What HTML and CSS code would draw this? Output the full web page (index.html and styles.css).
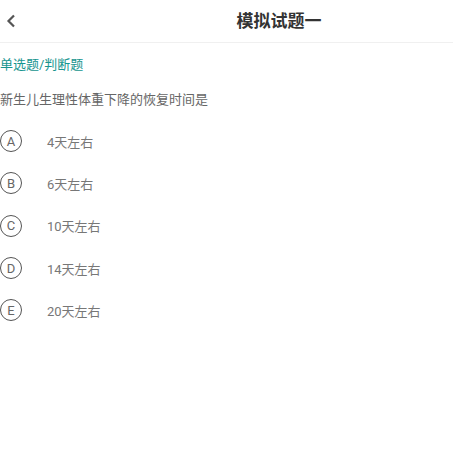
FILE: index.html
```html
<!DOCTYPE html>
<html lang="zh-CN">
<head>
<meta charset="utf-8">
<link rel="stylesheet" href="styles.css">
</head>
<body>
<header class="topbar">
  <span class="back">
    <svg width="10" height="14" viewBox="0 0 10 14"><path d="M8 1.5 L2.5 7 L8 12.5" fill="none" stroke="#555" stroke-width="2.2"/></svg>
  </span>
  <h1 class="title">模拟试题一</h1>
</header>
<main class="content">
  <div class="category">单选题/判断题</div>
  <div class="question">新生儿生理性体重下降的恢复时间是</div>
  <ul class="options">
    <li class="option"><span class="letter">A</span><span class="text">4天左右</span></li>
    <li class="option"><span class="letter">B</span><span class="text">6天左右</span></li>
    <li class="option"><span class="letter">C</span><span class="text">10天左右</span></li>
    <li class="option"><span class="letter">D</span><span class="text">14天左右</span></li>
    <li class="option"><span class="letter">E</span><span class="text">20天左右</span></li>
  </ul>
</main>
</body>
</html>
```
FILE: styles.css
```css
html, body {
  margin: 0;
  padding: 0;
  background: #fff;
  font-family: Roboto, "Noto Sans CJK SC", sans-serif;
}
.topbar {
  height: 42px;
  border-bottom: 1px solid #f0f0f0;
  display: flex;
  align-items: center;
}
.back {
  width: 30px;
  padding-left: 6px;
  display: flex;
  align-items: center;
  height: 100%;
}
.title {
  flex: 1;
  margin: 0;
  padding-left: 69px;
  text-align: center;
  font-size: 17px;
  font-weight: bold;
  color: #333;
  line-height: 42px;
}
.category {
  margin-top: 13px;
  font-size: 13px;
  line-height: 18px;
  color: #17958f;
}
.question {
  margin-top: 17px;
  font-size: 13px;
  line-height: 18px;
  color: #666;
}
.options {
  list-style: none;
  margin: 11px 0 0;
  padding: 0;
}
.option {
  display: flex;
  align-items: center;
  height: 42.3px;
}
.letter {
  width: 20px;
  height: 20px;
  border: 1px solid #555;
  border-radius: 50%;
  display: flex;
  align-items: center;
  justify-content: center;
  font-size: 13px;
  color: #666;
}
.text {
  margin-left: 25px;
  font-size: 13px;
  color: #777;
}
```
